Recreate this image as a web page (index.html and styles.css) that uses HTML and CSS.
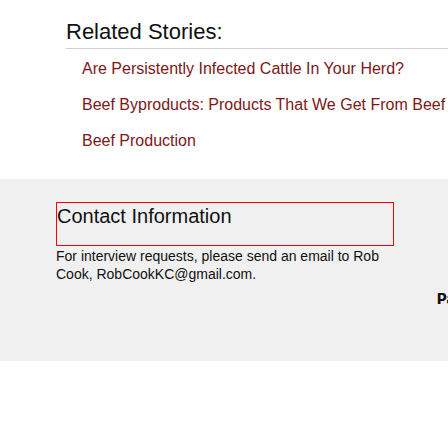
FILE: index.html
```html
<!DOCTYPE html>
<html>
<head>
<meta charset="utf-8">
<link rel="stylesheet" href="styles.css">
</head>
<body>
<section class="related">
  <h2 class="related-title">Related Stories:</h2>
  <ul class="related-list">
    <li><a href="#">Are Persistently Infected Cattle In Your Herd?</a></li>
    <li><a href="#">Beef Byproducts: Products That We Get From Beef Cattle</a></li>
    <li><a href="#">Beef Production</a></li>
  </ul>
</section>
<footer class="footer">
  <div class="contact">
    <div class="contact-box"><h3 class="contact-title">Contact Information</h3></div>
    <p class="contact-text">For interview requests, please send an email to Rob Cook, RobCookKC@gmail.com.</p>
  </div>
  <div class="footer-col">
    <h4 class="footer-col-title">Partners</h4>
  </div>
</footer>
</body>
</html>
```
FILE: styles.css
```css
html, body {
  margin: 0;
  padding: 0;
  background: #ffffff;
  overflow: hidden;
}
body {
  font-family: "Liberation Sans", Arial, sans-serif;
  width: 448px;
}
.related {
  padding-left: 66px;
  padding-bottom: 20px;
}
.related-title {
  margin: 19px 0 0;
  font-size: 22px;
  line-height: 26px;
  font-weight: normal;
  color: #111;
  padding-bottom: 3px;
  border-bottom: 1px solid #cfcfcf;
  white-space: nowrap;
}
.related-list {
  list-style: none;
  margin: 2px 0 0;
  padding: 0 0 0 16px;
}
.related-list li {
  font-size: 16px;
  line-height: 36px;
  white-space: nowrap;
}
.related-list a {
  color: #7d1717;
  text-decoration: none;
}
.footer {
  background: #f0f0f0;
  height: 182px;
  display: flex;
  padding-left: 56px;
  gap: 43px;
  overflow: hidden;
}
.contact {
  width: 338px;
  flex: none;
  padding-top: 23px;
}
.contact-box {
  box-sizing: border-box;
  height: 44px;
  border: 1px solid #ff0000;
}
.contact-title {
  margin: 0;
  padding-top: 2px;
  font-size: 20px;
  line-height: 23px;
  font-weight: normal;
  color: #111;
}
.contact-text {
  margin: 1px 0 0;
  font-size: 14px;
  line-height: 18px;
  color: #111;
}
.footer-col {
  flex: none;
  padding-top: 111px;
}
.footer-col-title {
  margin: 0;
  font-family: Inter, "Liberation Sans", sans-serif;
  font-weight: 800;
  font-size: 15px;
  line-height: 18px;
  color: #111;
  white-space: nowrap;
}
```
